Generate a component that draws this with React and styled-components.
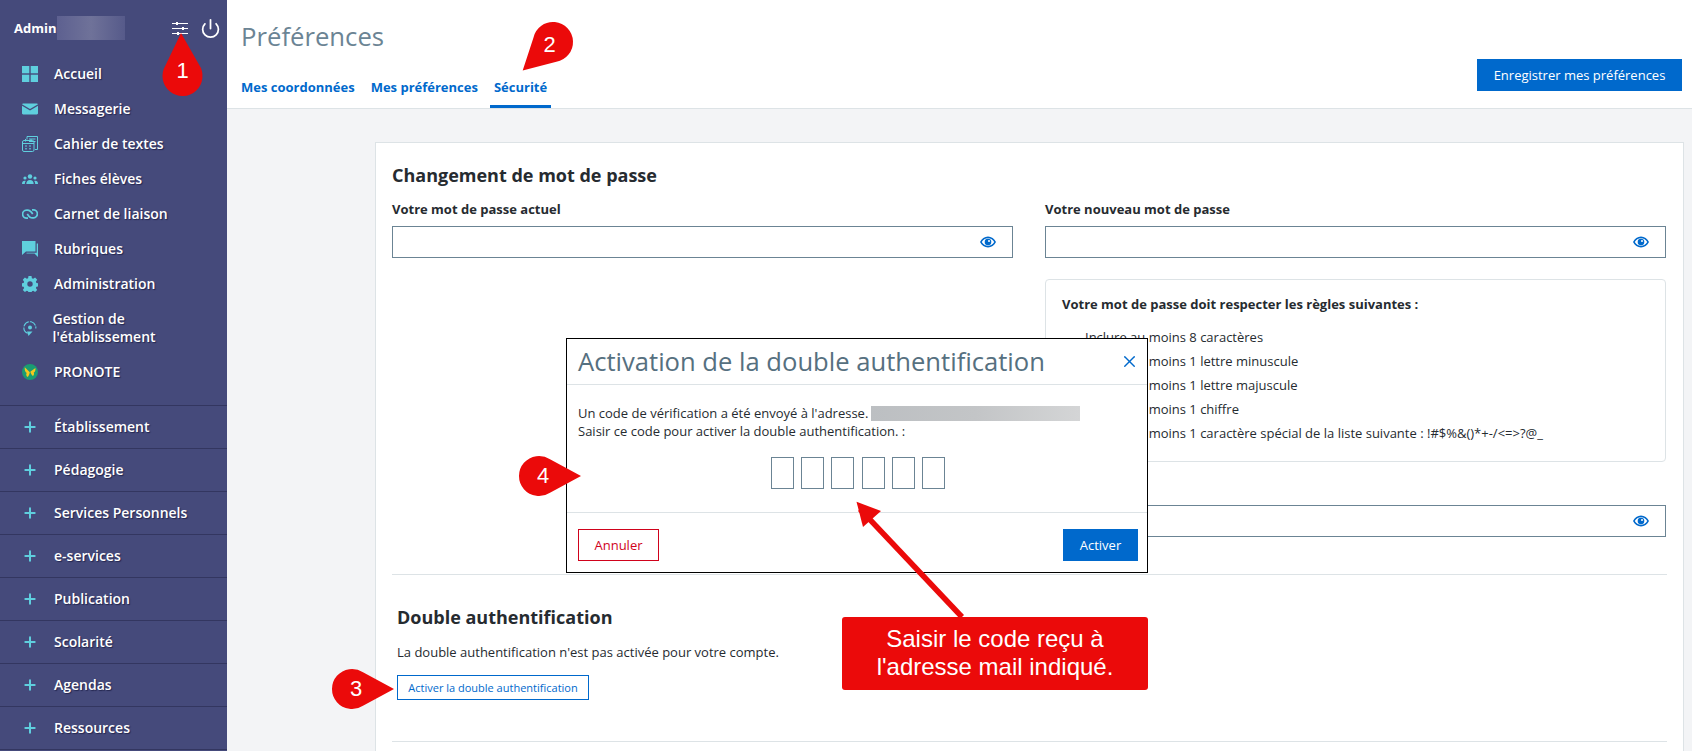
import React from "react";
import styled, { createGlobalStyle } from "styled-components";
import { Plus, Power, X } from "lucide-react";

const GlobalStyle = createGlobalStyle`
  html, body {
    margin: 0;
    padding: 0;
    height: 100%;
    overflow: hidden;
    font-family: "Open Sans", "Liberation Sans", sans-serif;
    color: #262b30;
  }
  * { box-sizing: border-box; }
`;

const Page = styled.div`
  position: relative;
  display: flex;
  width: 1692px;
  height: 751px;
  overflow: hidden;
  background: #f3f4f6;
`;

/* ---- sidebar ---- */
const Sidebar = styled.nav`
  flex: 0 0 227px;
  background: #454a7b;
  color: #fff;
`;
const UserBar = styled.div`
  display: flex;
  align-items: center;
  height: 56px;
  padding: 0 6.5px 0 14px;
`;
const UserName = styled.span`
  font-size: 13px;
  font-weight: 700;
`;
const BlurredName = styled.span`
  width: 68px;
  height: 24px;
  margin-left: 1px;
  background: linear-gradient(90deg, #5d6090, #6f7299 50%, #565a8a);
`;
const UserIcons = styled.div`
  display: flex;
  align-items: center;
  gap: 11.5px;
  margin-left: auto;
`;
const MainList = styled.div`
  padding-bottom: 15px;
  border-bottom: 1px solid #333660;
`;
const NavItem = styled.a`
  display: flex;
  align-items: center;
  min-height: ${(p) => (p.$tall ? "53.5px" : "35px")};
  padding-left: 22px;
  font-size: 14px;
  font-weight: 600;
  line-height: 18px;
  text-shadow: 1px 1px 1px #23264f;
  svg { flex: 0 0 16px; margin-right: ${(p) => (p.$tall ? "14.5px" : "16px")}; }
`;
const Section = styled.a`
  display: flex;
  align-items: center;
  height: 43px;
  padding-left: 22px;
  font-size: 14px;
  font-weight: 600;
  text-shadow: 1px 1px 1px #23264f;
  border-bottom: 1px solid #333660;
  svg { flex: 0 0 16px; margin-right: 16px; color: #5fcfde; }
`;

/* ---- top bar ---- */
const Main = styled.main`
  flex: 1;
  display: flex;
  flex-direction: column;
  min-width: 0;
`;
const Header = styled.header`
  display: flex;
  flex: 0 0 109px;
  justify-content: space-between;
  padding: 0 10px 0 14px;
  background: #fff;
  border-bottom: 1px solid #dde3e6;
`;
const PageTitle = styled.h1`
  margin: 18px 0 0;
  font-size: 25.7px;
  font-weight: 400;
  line-height: 37px;
  color: #6b8494;
`;
const Tabs = styled.div`
  display: flex;
  margin: 8px 0 0 -4px;
`;
const Tab = styled.a`
  height: 45px;
  padding: 15px 4px 0;
  margin-right: 8px;
  font-size: 13px;
  font-weight: 700;
  line-height: 18px;
  color: #0069cc;
  border-bottom: 3px solid ${(p) => (p.$active ? "#0069cc" : "transparent")};
`;
const PrimaryButton = styled.button`
  height: 32px;
  width: ${(p) => (p.$small ? "75px" : "205px")};
  margin-top: ${(p) => (p.$small ? "0" : "59px")};
  padding: 0;
  border: 0;
  background: #0069cc;
  color: #fff;
  font: 400 13px "Open Sans", sans-serif;
`;

/* ---- form card ---- */
const Content = styled.div`
  flex: 1;
  padding: 33px 8px 0 148px;
`;
const Card = styled.section`
  height: 640px;
  padding: 20px 16px 0;
  background: #fff;
  border: 1px solid #dde3e6;
`;
const CardTitle = styled.h2`
  margin: 0;
  font-size: 18px;
  font-weight: 700;
  line-height: 25px;
`;
const Columns = styled.div`
  display: grid;
  grid-template-columns: 621px 621px;
  gap: 32px;
  margin-top: 12px;
  padding-bottom: 37px;
  border-bottom: 1px solid #dde3e6;
`;
const Label = styled.label`
  display: block;
  height: 18px;
  margin-bottom: 8px;
  font-size: 13px;
  font-weight: 700;
  line-height: 18px;
`;
const InputBox = styled.div`
  display: flex;
  align-items: center;
  justify-content: flex-end;
  height: 32px;
  margin-top: ${(p) => p.$top || 0};
  padding-right: 16px;
  border: 1px solid #6b8494;
  background: #fff;
`;
const RulesBox = styled.div`
  height: 183px;
  margin-top: 21px;
  padding: 15px 16px 0;
  border: 1px solid #dde3e6;
  border-radius: 4px;
`;
const RulesTitle = styled.div`
  font-size: 13px;
  font-weight: 700;
  line-height: 18px;
`;
const RulesList = styled.ul`
  margin: 12px 0 0;
  padding: 0 0 0 23px;
  list-style: none;
  li {
    font-size: 13px;
    line-height: 24px;
  }
`;
const DoubleAuth = styled.div`
  padding: 30px 5px 0;
`;
const Para = styled.p`
  margin: 13px 0 0;
  font-size: 13px;
  line-height: 18px;
`;
const OutlineButton = styled.button`
  display: block;
  width: 192px;
  height: 25px;
  margin: 14px 0 0;
  padding: 0;
  background: #fff;
  border: 1px solid #0069cc;
  color: #0069cc;
  font: 400 11px "Open Sans", sans-serif;
`;
const BottomLine = styled.div`
  margin: 41px -5px 0;
  border-top: 1px solid #dde3e6;
`;

/* ---- modal ---- */
const Modal = styled.div`
  position: absolute;
  left: 566px;
  top: 338px;
  display: flex;
  flex-direction: column;
  width: 582px;
  height: 235px;
  background: #fff;
  border: 1px solid #000;
`;
const ModalHead = styled.div`
  display: flex;
  flex: 0 0 46px;
  align-items: center;
  justify-content: space-between;
  padding: 0 8px 0 11px;
  border-bottom: 1px solid #dde3e6;
`;
const ModalTitle = styled.div`
  font-size: 25.6px;
  line-height: 34px;
  color: #567080;
`;
const ModalBody = styled.div`
  flex: 1;
  padding: 19px 11px 0;
  font-size: 13px;
  line-height: 18px;
  border-bottom: 1px solid #dde3e6;
`;
const Blur = styled.span`
  display: inline-block;
  width: 209px;
  height: 15px;
  margin-left: 3px;
  vertical-align: -3px;
  background: linear-gradient(90deg, #bcbfc2, #c3c5c7 50%, #d4d5d6);
`;
const CodeRow = styled.div`
  display: flex;
  justify-content: center;
  gap: 7.4px;
  margin-top: 17px;
  padding-left: 2px;
`;
const CodeCell = styled.div`
  width: 23px;
  height: 32px;
  border: 1px solid #6b8494;
`;
const ModalFoot = styled.div`
  display: flex;
  flex: 0 0 59px;
  align-items: flex-start;
  justify-content: space-between;
  padding: 16px 9px 0 11px;
`;
const CancelButton = styled.button`
  width: 81px;
  height: 32px;
  padding: 0;
  background: #fff;
  border: 1px solid #d0021b;
  color: #d0021b;
  font: 400 13px "Open Sans", sans-serif;
`;

/* ---- red annotations over the screenshot ---- */
const Callout = styled.div`
  position: absolute;
  left: 842px;
  top: 617px;
  width: 306px;
  height: 73px;
  padding-top: 8px;
  background: #eb0a0a;
  border-radius: 3px;
  color: #fff;
  text-align: center;
  font: 400 24px/28px "Liberation Sans", Arial, sans-serif;
`;
const Overlay = styled.svg`
  position: absolute;
  left: 0;
  top: 0;
  pointer-events: none;
`;
const PinNumber = styled.span`
  position: absolute;
  left: ${(p) => p.$x}px;
  top: ${(p) => p.$y}px;
  width: 20px;
  margin: -14px 0 0 -10px;
  color: #fff;
  text-align: center;
  font: 400 22px/28px "Liberation Sans", Arial, sans-serif;
`;

const Eye = () => (
  <svg width="16" height="12" viewBox="0 0 16 12">
    <path fill="#0069cc" d="M8 .5C4.600.5 1.600 2.700 0 6c1.600 3.300 4.600 5.500 8 5.500s6.400-2.200 8-5.500C14.400 2.700 11.400.5 8 .5zm0 9.300c-2.700 0-5-1.500-6.200-3.800C3 3.700 5.300 2.200 8 2.200s5 1.500 6.200 3.800C13 8.300 10.700 9.800 8 9.800z" />
    <circle cx="8" cy="6" r="3.300" fill="#0069cc" />
    <circle cx="9" cy="5" r="1" fill="#fff" />
  </svg>
);

const Sliders = () => (
  <svg width="16" height="14" viewBox="0 0 16 14" stroke="#fff" fill="none">
    <path d="M0 2.500h16M0 7.500h16M0 12.500h16" strokeWidth="1" />
    <path d="M5 1v3M11 6v3M6 11v3" strokeWidth="2" />
  </svg>
);

const teal = "#5fcfde";
const GridIcon = () => (
  <svg width="16" height="16" viewBox="0 0 16 16" fill={teal}>
    <rect width="7.300" height="7.300" />
    <rect x="8.700" width="7.300" height="7.300" />
    <rect y="8.700" width="7.300" height="7.300" />
    <rect x="8.700" y="8.700" width="7.300" height="7.300" />
  </svg>
);
const MailIcon = () => (
  <svg width="16" height="16" viewBox="0 0 16 16" fill={teal}>
    <path d="M1.200 2.500h13.600c.5 0 1 .3 1.200.8L8 8 0 3.300c.2-.5.7-.8 1.200-.8z" />
    <path d="M0 4.800 8 9.500l8-4.700v7.500c0 .7-.5 1.200-1.200 1.200H1.200C.5 13.500 0 13 0 12.300z" />
  </svg>
);
const BookIcon = () => (
  <svg width="16" height="16" viewBox="0 0 16 16" fill="none" stroke={teal} strokeWidth="1">
    <path d="M5 3.500V.5h10.500v13H13M7 3h6.500M7 5.500h6.500" />
    <rect x=".5" y="4.500" width="11.500" height="11" rx="1.500" />
    <path d="M.5 7.500H12M3.500 3v2.500M9 3v2.500M3 10h2M7 10h2M3 12.800h2M7 12.800h2" />
  </svg>
);
const PeopleIcon = () => (
  <svg width="16" height="16" viewBox="0 0 16 16" fill={teal}>
    <circle cx="8" cy="5.500" r="2.200" />
    <circle cx="3" cy="7" r="1.600" />
    <circle cx="13" cy="7" r="1.600" />
    <path d="M4.300 13c0-2.500 1.500-4 3.700-4s3.700 1.500 3.700 4zM0 13c0-2 1-3.200 2.700-3.200.5 0 .8.100 1.100.3-.7.700-1 1.700-1 2.900zM16 13c0-2-1-3.200-2.700-3.200-.5 0-.8.100-1.100.3.7.700 1 1.700 1 2.900z" />
  </svg>
);
const LinkIcon = () => (
  <svg width="16" height="16" viewBox="0 0 16 16" fill="none" stroke={teal} strokeWidth="1.700">
    <path d="M6 12.200H4.800a4 4 0 0 1-.4-8c2.500-.4 4.700.8 6.300 4" />
    <path d="M10 3.800h1.200a4 4 0 0 1 .4 8c-2.500.4-4.700-.8-6.300-4" />
  </svg>
);
const ChatIcon = () => (
  <svg width="16" height="16" viewBox="0 0 16 16" fill={teal}>
    <path d="M0 0h13.500v10.500H4L0 14z" />
    <path d="M14.700 2.500H16V16l-3.500-3.500H4.500v-.8h10.200z" />
  </svg>
);
const GearIcon = () => (
  <svg width="16" height="16" viewBox="0 0 16 16" fill={teal}>
    <path fillRule="evenodd" d="M6.500 0h3l.4 2.200 1.300.6L13.100 1.500l2.100 2.200-1.300 1.900.5 1.300 2.100.4v3l-2.100.4-.5 1.300 1.300 1.900-2.100 2.100-1.900-1.300-1.300.5-.4 2.300h-3l-.4-2.300-1.300-.5-1.900 1.300L.8 14l1.300-1.900-.5-1.300-2-.4v-3l2-.4.5-1.300L.8 3.700l2.100-2.200 1.900 1.300 1.300-.6zM8 5.300a2.700 2.700 0 1 0 0 5.400 2.700 2.700 0 0 0 0-5.400z" />
  </svg>
);
const SchoolIcon = () => (
  <svg width="16" height="16" viewBox="0 0 16 16" fill="none" stroke={teal}>
    <path d="M5.500 13.200A6 6 0 1 1 13.800 8.500" strokeWidth="1.100" strokeDasharray="7 1" />
    <circle cx="8" cy="7.500" r="2" fill={teal} stroke="none" />
    <path d="M5 11.500h5.500L6.500 16z" fill={teal} stroke="none" />
  </svg>
);
const PronoteIcon = () => (
  <svg width="16" height="16" viewBox="0 0 16 16">
    <circle cx="8" cy="8" r="8" fill="#1a9c72" />
    <path fill="#f7c81e" d="M7.800 8.200 2.800 3.200C2.500 5.800 3 8 4.700 8.900 3.800 10 4.200 12 5.600 13c1-.8 2-3 2.200-4.800z" />
    <path fill="#f7c81e" d="M8.300 7.800 13.400 4c.3 2-.2 4-1.700 4.600.7 1 .4 2.600-.8 3.300-1-.5-2.200-2.300-2.600-4.100z" />
  </svg>
);

const mainItems = [
  { label: "Accueil", icon: <GridIcon /> },
  { label: "Messagerie", icon: <MailIcon /> },
  { label: "Cahier de textes", icon: <BookIcon /> },
  { label: "Fiches élèves", icon: <PeopleIcon /> },
  { label: "Carnet de liaison", icon: <LinkIcon /> },
  { label: "Rubriques", icon: <ChatIcon /> },
  { label: "Administration", icon: <GearIcon /> },
  { label: "Gestion de l'établissement", icon: <SchoolIcon />, tall: true },
  { label: "PRONOTE", icon: <PronoteIcon /> },
];

const sections = [
  "Établissement",
  "Pédagogie",
  "Services Personnels",
  "e-services",
  "Publication",
  "Scolarité",
  "Agendas",
  "Ressources",
];

const rules = [
  "Inclure au moins 8 caractères",
  "Inclure au moins 1 lettre minuscule",
  "Inclure au moins 1 lettre majuscule",
  "Inclure au moins 1 chiffre",
  "Inclure au moins 1 caractère spécial de la liste suivante : !#$%&()*+-/<=>?@_",
];

// teardrop pin: circle plus a point reaching tx,ty
function pinPath(cx, cy, r, tx, ty) {
  const dx = tx - cx;
  const dy = ty - cy;
  const d = Math.hypot(dx, dy);
  const a = Math.atan2(dy, dx);
  const b = Math.acos(r / d) * 0.92;
  const p1 = [cx + r * Math.cos(a - b), cy + r * Math.sin(a - b)];
  const p2 = [cx + r * Math.cos(a + b), cy + r * Math.sin(a + b)];
  return `M${tx} ${ty} L${p1[0]} ${p1[1]} A${r} ${r} 0 1 0 ${p2[0]} ${p2[1]} Z`;
}

const pins = [
  { n: 1, cx: 182.5, cy: 76, tx: 181, ty: 33, lx: 182.5, ly: 71 },
  { n: 2, cx: 553, cy: 42, tx: 522.7, ty: 70.6, lx: 549.5, ly: 45 },
  { n: 3, cx: 352, cy: 689, tx: 394, ty: 689, lx: 356, ly: 689 },
  { n: 4, cx: 539, cy: 476, tx: 581, ty: 476, lx: 543, ly: 476 },
];

export default function App() {
  return (
    <Page>
      <GlobalStyle />
      <Sidebar>
        <UserBar>
          <UserName>Admin</UserName>
          <BlurredName />
          <UserIcons>
            <Sliders />
            <Power size={21} color="#fff" strokeWidth={2} />
          </UserIcons>
        </UserBar>
        <MainList>
          {mainItems.map((item) => (
            <NavItem key={item.label} $tall={item.tall}>
              {item.icon}
              <span>{item.label}</span>
            </NavItem>
          ))}
        </MainList>
        {sections.map((s) => (
          <Section key={s}>
            <Plus size={16} strokeWidth={3} />
            {s}
          </Section>
        ))}
      </Sidebar>

      <Main>
        <Header>
          <div>
            <PageTitle>Préférences</PageTitle>
            <Tabs>
              <Tab>Mes coordonnées</Tab>
              <Tab>Mes préférences</Tab>
              <Tab $active>Sécurité</Tab>
            </Tabs>
          </div>
          <PrimaryButton>Enregistrer mes préférences</PrimaryButton>
        </Header>
        <Content>
          <Card>
            <CardTitle>Changement de mot de passe</CardTitle>
            <Columns>
              <div>
                <Label>Votre mot de passe actuel</Label>
                <InputBox>
                  <Eye />
                </InputBox>
              </div>
              <div>
                <Label>Votre nouveau mot de passe</Label>
                <InputBox>
                  <Eye />
                </InputBox>
                <RulesBox>
                  <RulesTitle>Votre mot de passe doit respecter les règles suivantes :</RulesTitle>
                  <RulesList>
                    {rules.map((r) => (
                      <li key={r}>{r}</li>
                    ))}
                  </RulesList>
                </RulesBox>
                <InputBox $top="43px">
                  <Eye />
                </InputBox>
              </div>
            </Columns>
            <DoubleAuth>
              <CardTitle>Double authentification</CardTitle>
              <Para>La double authentification n'est pas activée pour votre compte.</Para>
              <OutlineButton>Activer la double authentification</OutlineButton>
              <BottomLine />
            </DoubleAuth>
          </Card>
        </Content>
      </Main>

      <Modal>
        <ModalHead>
          <ModalTitle>Activation de la double authentification</ModalTitle>
          <X size={19} color="#0069cc" strokeWidth={1.8} />
        </ModalHead>
        <ModalBody>
          Un code de vérification a été envoyé à l'adresse.
          <Blur />
          <br />
          Saisir ce code pour activer la double authentification. :
          <CodeRow>
            {[0, 1, 2, 3, 4, 5].map((i) => (
              <CodeCell key={i} />
            ))}
          </CodeRow>
        </ModalBody>
        <ModalFoot>
          <CancelButton>Annuler</CancelButton>
          <PrimaryButton $small>Activer</PrimaryButton>
        </ModalFoot>
      </Modal>

      <Callout>
        Saisir le code reçu à
        <br />
        l'adresse mail indiqué.
      </Callout>

      <Overlay width="1692" height="751" viewBox="0 0 1692 751">
        {pins.map((p) => (
          <path key={p.n} d={pinPath(p.cx, p.cy, 20, p.tx, p.ty)} fill="#eb0a0a" />
        ))}
        <path d="M962 617 860 509" stroke="#eb0a0a" strokeWidth="5.500" fill="none" />
        <path d="M856.500 501.700 881 511 863 527z" fill="#eb0a0a" />
      </Overlay>
      {pins.map((p) => (
        <PinNumber key={p.n} $x={p.lx} $y={p.ly}>
          {p.n}
        </PinNumber>
      ))}
    </Page>
  );
}
